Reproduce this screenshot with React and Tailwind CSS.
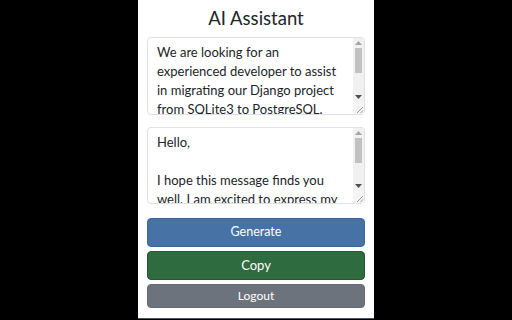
import React from "react";

const t1 =
  "We are looking for an experienced developer to assist in migrating our Django project from SQLite3 to PostgreSQL. The project is currently running in production and we need to ensure a smooth transition with minimal downtime. Experience with data migration, Django ORM and database optimization is required. Please include examples of similar work you have done in the past.";
const t2 =
  "Hello,\n\nI hope this message finds you well. I am excited to express my interest in your project to migrate your Django application from SQLite3 to PostgreSQL. I have extensive experience with Django and database migrations, and I am confident that I can deliver a smooth and reliable transition.\n\nBest regards";

function FakeScrollbar() {
  return (
    <div className="w-[11px] flex flex-col bg-[#f1f1f1]">
      <div className="h-[10px] flex items-center justify-center">
        <svg width="7" height="4" viewBox="0 0 7 4">
          <polygon points="3.5,0 7,4 0,4" fill="#a3a3a3" />
        </svg>
      </div>
      <div className="flex-1 px-[2px]">
        <div className="h-[25px] bg-[#c1c1c1]" />
      </div>
      <div className="h-[10px] flex items-center justify-center">
        <svg width="7" height="4" viewBox="0 0 7 4">
          <polygon points="0,0 7,0 3.5,4" fill="#505050" />
        </svg>
      </div>
      <div className="h-[12px] flex items-end justify-end bg-[#f4f4f4]">
        <svg width="9" height="9" viewBox="0 0 9 9">
          <line x1="8" y1="2" x2="2" y2="8" stroke="#9a9a9a" strokeWidth="1" />
          <line x1="8" y1="5.5" x2="5.5" y2="8" stroke="#9a9a9a" strokeWidth="1" />
        </svg>
      </div>
    </div>
  );
}

function Box({ value, className }) {
  return (
    <div className={"w-full flex border border-[#dee2e6] rounded-[4px] overflow-hidden bg-white " + className}>
      <textarea
        readOnly
        defaultValue={value}
        className="flex-1 min-w-0 resize-none overflow-hidden pl-[9px] pr-[12px] pt-[5px] font-['Lato',sans-serif] text-[13px] leading-[19px] text-[#212529] outline-none"
      />
      <FakeScrollbar />
    </div>
  );
}

export default function App() {
  return (
    <div className="w-[512px] h-[320px] bg-black flex justify-center font-['Lato',sans-serif]">
      <div className="w-[236px] h-[319px] bg-white border-b border-[#4a5568] flex flex-col px-[9px]">
        <div className="h-[37px] flex items-center justify-center text-[18.5px] text-[#212529] pt-[1px]">
          AI Assistant
        </div>
        <Box value={t1} className="h-[78px]" />
        <Box value={t2} className="mt-[12px] h-[77px]" />
        <button className="mt-[14px] h-[29px] w-full rounded-[4px] bg-[#4672a6] border border-[#3d679b] text-white text-[12.5px]">
          Generate
        </button>
        <button className="mt-[4px] h-[29px] w-full rounded-[4px] bg-[#2e6b3e] border border-[#245a31] text-white text-[13px]">
          Copy
        </button>
        <button className="mt-[4px] h-[24px] w-full rounded-[4px] bg-[#6c737c] border border-[#656c75] text-white text-[12px]">
          Logout
        </button>
      </div>
    </div>
  );
}
